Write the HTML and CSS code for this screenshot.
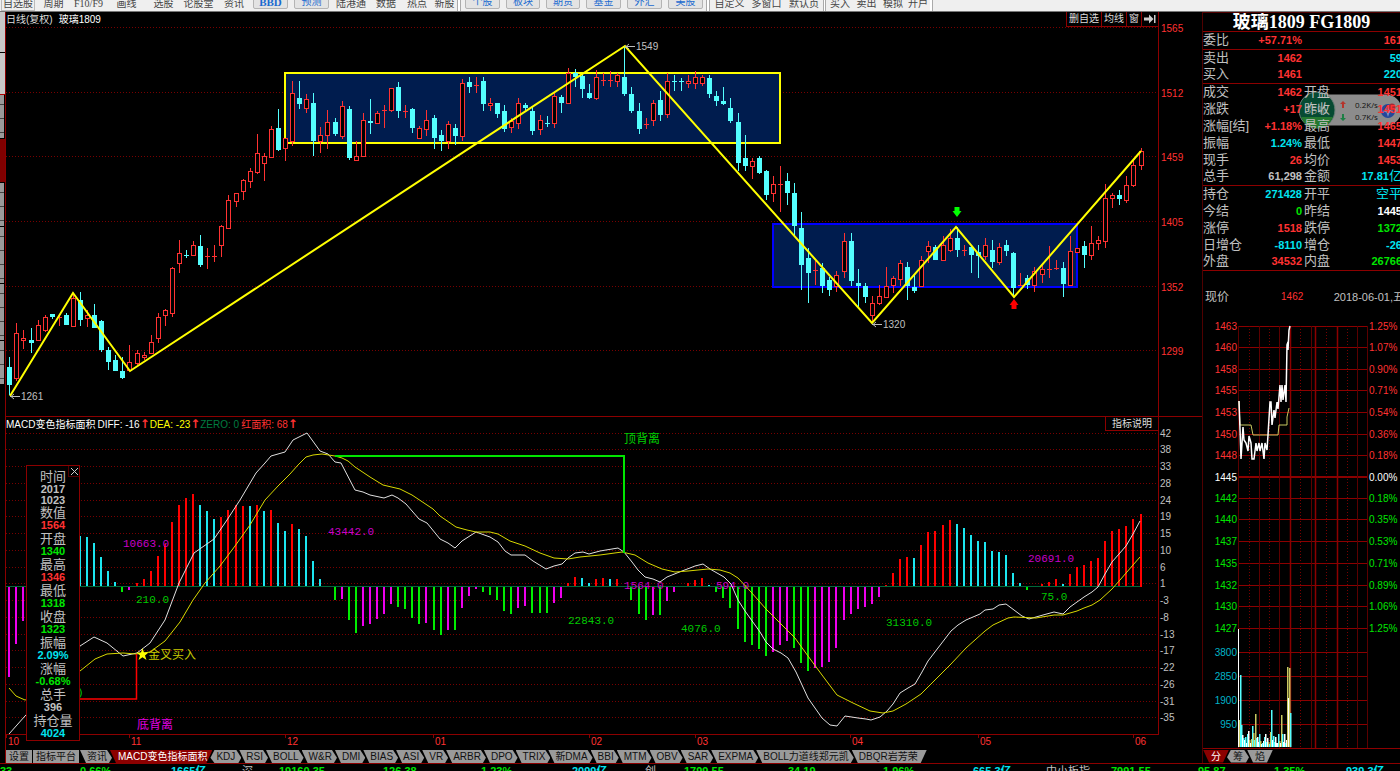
FILE: index.html
```html
<!DOCTYPE html>
<html lang="zh-CN">
<head>
<meta charset="utf-8">
<title>玻璃1809 FG1809</title>
<link rel="stylesheet" href="styles.css">
</head>
<body>
<nav class="toolbar">
  <button class="tool boxed">自选股</button><button class="tool">周期</button><button class="tool serif">F10/F9</button><button class="tool">画线</button><button class="tool">选股</button><button class="tool">论股堂</button><button class="tool">资讯</button><button class="tool key serif bold">BBD</button><button class="tool key">预测</button><button class="tool">陆港通</button><button class="tool">数据</button><button class="tool">热点</button><button class="tool">新股</button><i class="sep"></i><button class="tool key">个股</button><button class="tool key">板块</button><button class="tool key">期货</button><button class="tool key">基金</button><button class="tool key">外汇</button><button class="tool key">美股</button><i class="sep"></i><button class="tool">自定义</button><button class="tool">多窗口</button><button class="tool">默认页</button><i class="sep"></i><button class="tool">买入</button><button class="tool">卖出</button><button class="tool">模拟</button><button class="tool">开户</button><i class="sep end"></i>
</nav>

<main class="workspace">
  <aside class="rail">
    <i class="light s40"></i><i class="light s42 redline"></i><i class="s44"></i><i class="on s44"></i><i class="s44"></i><i class="s56"></i><i class="s56"></i><i class="s44"></i>
  </aside>

  <section class="charts">
    <header class="bar price-bar">
      <span class="caption">日线(复权)</span><b class="caption name">玻璃1809</b>
      <div class="actions">
        <button>删自选</button><button>均线</button><button>窗</button>
        <button aria-label="跳到最新"><svg width="12" height="10" viewBox="0 0 12 10"><path d="M0 3.500h5V.500L9.500 5 5 9.500v-3H0z" fill="#ccc"/><path d="M10 1h1.500v8H10z" fill="#ccc"/></svg></button>
      </div>
    </header>
    <svg id="price" class="plot" viewBox="6 27 1196 389"></svg>

    <header class="bar macd-bar">
      <span class="white">MACD变色指标面积</span><span class="white">DIFF: -16</span><span class="up">↑</span>
      <span class="yellow">DEA: -23</span><span class="up">↑</span>
      <span class="zero">ZERO: 0</span><span class="red">红面积: 68</span><span class="up">↑</span>
      <div class="actions"><button class="wide">指标说明</button></div>
    </header>
    <div class="macd">
      <svg id="macd" class="plot" viewBox="6 431 1196 318"></svg>
      <dl class="inspector">
        <button class="close" aria-label="关闭"><svg width="9" height="9" viewBox="0 0 9 9"><path d="M1 1l7 7M8 1l-7 7" stroke="#ccc" fill="none"/></svg></button>
        <dt>时间</dt><dd class="date">2017</dd><dd class="date second">1023</dd>
        <dt>数值</dt><dd class="red">1564</dd>
        <dt>开盘</dt><dd class="green">1340</dd>
        <dt>最高</dt><dd class="red">1346</dd>
        <dt>最低</dt><dd class="green">1318</dd>
        <dt>收盘</dt><dd class="green">1323</dd>
        <dt>振幅</dt><dd class="cyan">2.09%</dd>
        <dt>涨幅</dt><dd class="green">-0.68%</dd>
        <dt>总手</dt><dd>396</dd>
        <dt>持仓量</dt><dd class="cyan">4024</dd>
      </dl>
    </div>
    <nav class="tabs">
      <button class="block">设置</button><button class="block">指标平台</button><button>资讯</button><button class="active">MACD变色指标面积</button><button class="hex">KDJ</button><button>RSI</button><button>BOLL</button><button>W&amp;R</button><button>DMI</button><button>BIAS</button><button>ASI</button><button>VR</button><button>ARBR</button><button>DPO</button><button>TRIX</button><button>新DMA</button><button>BBI</button><button>MTM</button><button>OBV</button><button>SAR</button><button>EXPMA</button><button>BOLL力道线郑元凯</button><button class="last">DBQR岩芳荣</button>
    </nav>
  </section>

  <section class="side">
    <h1>玻璃1809 FG1809</h1>
    <table class="quotes">
      <tr class="rule"><th>委比</th><td class="red">+57.71%</td><th></th><td class="red">161</td></tr>
      <tr><th>卖出</th><td class="red">1462</td><th></th><td class="cyan">59</td></tr>
      <tr class="rule"><th>买入</th><td class="red">1461</td><th></th><td class="cyan">220</td></tr>
      <tr><th>成交</th><td class="red">1462</td><th>开盘</th><td class="red">1451</td></tr>
      <tr><th>涨跌</th><td class="red">+17</td><th>昨收</th><td class="red">1451</td></tr>
      <tr><th>涨幅[结]</th><td class="red">+1.18%</td><th>最高</th><td class="red">1465</td></tr>
      <tr><th>振幅</th><td class="cyan">1.24%</td><th>最低</th><td class="red">1447</td></tr>
      <tr><th>现手</th><td class="red">26</td><th>均价</th><td class="red">1453</td></tr>
      <tr class="rule"><th>总手</th><td>61,298</td><th>金额</th><td class="cyan">17.81<span class="unit">亿</span></td></tr>
      <tr><th>持仓</th><td class="cyan">271428</td><th>开平</th><td class="cyan"><span class="unit">空平</span></td></tr>
      <tr><th>今结</th><td class="green">0</td><th>昨结</th><td class="white">1445</td></tr>
      <tr><th>涨停</th><td class="red">1518</td><th>跌停</th><td class="green">1372</td></tr>
      <tr><th>日增仓</th><td class="cyan">-8110</td><th>增仓</th><td class="cyan">-26</td></tr>
      <tr class="rule"><th>外盘</th><td class="red">34532</td><th>内盘</th><td class="green">26766</td></tr>
    </table>
    <div class="now"><span>现价</span><span class="red">1462</span><span class="day">2018-06-01,五</span></div>
    <svg id="intraday" class="plot" viewBox="1203 318 197 430"></svg>
    <nav class="tabs side-tabs">
      <button class="active">分</button><button class="hex">筹</button><button class="last">焰</button>
    </nav>
    <svg class="meter" width="103" height="38" viewBox="0 0 103 38">
      <path d="M19 3.500h69a15.500 15.500 0 010 31H19z" fill="#8c8c8c"/>
      <circle cx="19" cy="19" r="18" fill="#064a32" stroke="#6b7f78"/>
      <path d="M3 26h32a17 17 0 01-32 0z" fill="#23782f"/>
      <text x="7" y="23" class="pct">35%</text>
      <path d="M44 17v-4h-2l3-3 3 3h-2v4z" fill="#b5342c"/>
      <path d="M44 23v4h-2l3 3 3-3h-2v-4z" fill="#1c7f45"/>
      <text x="57" y="17" class="rate">0.2K/s</text><text x="57" y="29" class="rate">0.7K/s</text>
      <circle cx="90" cy="20" r="7" fill="#24479c"/><path d="M90 14l1.500 4.500L96 20l-4.500 1.500L90 26l-1.500-4.500L84 20l4.500-1.500z" fill="#7d90bd"/><circle cx="94" cy="16" r="3.500" fill="#a82a34"/>
    </svg>
  </section>
</main>

<footer class="ticker">
  <span class="green">33</span><span class="green">0.66%</span><span class="cyan">1665亿</span><span class="label">深</span><span class="green">19160.35</span><span class="green">126.38</span><span class="green">1.23%</span><span class="cyan">2099亿</span><span class="label">创</span><span class="green">1799.55</span><span class="green">34.19</span><span class="green">1.96%</span><span class="cyan">665.3亿</span><span class="label">中小板指</span><span class="green">7991.55</span><span class="green">95.87</span><span class="green">1.35%</span><span class="cyan">939.3亿</span>
</footer>
<script src="charts.js"></script>
</body>
</html>
```

FILE: styles.css
```css
* { box-sizing: border-box; margin: 0; padding: 0; }
html, body { height: 100%; }
body {
  display: flex; flex-direction: column; overflow: hidden;
  background: #000; color: #c0c0c0;
  font: 10px/14px "Liberation Sans", "Noto Sans CJK SC", sans-serif;
}
button { font: inherit; color: inherit; background: none; border: 0; white-space: nowrap; }
svg { display: block; }
.red { color: #ff3232; }
.green { color: #00e600; }
.cyan { color: #00e4f0; }
.white { color: #fff; }
.yellow { color: #ffff00; }
.zero { color: #007c40; }

.toolbar {
  display: grid; flex: none; height: 12px; overflow: hidden; align-items: end; align-content: end;
  grid-template-columns: 34px 37px 33px 43px 31px 39px 32px 41px 41px 38px 32px 30px 25px 5px 41px 40px 40px 41px 41px 41px 5px 37px 37px 38px 4px 26px 27px 26px 24px 4px;
  padding-left: 1px; background: #efefef; border-bottom: 1px solid #777; color: #444;
}
.tool { height: 15px; line-height: 14px; }
.serif { font-family: "Liberation Serif", serif; }
.bold { font-weight: bold; font-size: 11px; }
.boxed { border: 1px solid #bbb; }
.key { margin: 0 3px 2px; height: 14px; line-height: 12px; color: #1a6ad0; background: #e3e3e3; border: 1px solid #b4b4b4; border-radius: 2px; }
.sep { height: 11px; border: solid #aaa; border-width: 0 1px; margin-right: 1px; background: #fff; }
.end { border-width: 0 1px 0 0; }

.workspace { display: grid; grid-template-columns: 6px minmax(0, 1fr) 198px; flex: none; }
.rail { border-right: 1px solid #8c0000; }
.rail i {
  display: block; border-bottom: 1px solid #000;
  background: linear-gradient(90deg, transparent 4px, #000 4px), repeating-linear-gradient(#999 0 9px, #444 9px 10px, #999 10px 14px);
}
.rail .light { background: #c8c8c8; }
.rail .on { background: #800000; }
.rail .redline { border-color: #b00000; }
.s40 { height: 41px; }
.s42 { height: 42px; }
.s44 { height: 44px; }
.s56 { height: 57px; }

.charts { min-width: 0; }
.plot { width: 100%; height: auto; overflow: visible; }
.bar { display: flex; height: 15px; margin-right: 43px; border-right: 1px solid #8c0000; line-height: 15px; white-space: nowrap; }
.caption { color: #ddd; }
.name { margin-left: 6px; color: #fff; font-weight: normal; }
.actions { display: flex; margin-left: auto; }
.actions button { padding: 0 2px; border: solid #8c0000; border-width: 0 0 1px 1px; color: #ddd; line-height: 14px; }
.actions .wide { padding: 0 6px; }
.macd-bar { border-top: 1px solid #8c0000; margin-right: 0; border-right: 0; padding-right: 43px; }
.macd-bar > span { margin-right: 2px; }
.macd-bar > .up { margin-right: 4px; margin-left: -2px; width: 6px; color: #ff3232; font: bold 12px/14px "DejaVu Sans", sans-serif; }
.macd-bar .actions { border-right: 1px solid #8c0000; }
.macd { position: relative; }
.inspector {
  position: absolute; left: 20px; top: 34px; width: 54px; padding: 4px 0 0;
  background: #000; border: 1px solid #8c0000; text-align: center;
  font-size: 13px; line-height: 13px;
}
.inspector dd { font-weight: bold; font-size: 11px; line-height: 13px; }
.inspector .date { line-height: 12px; }
.inspector .second { line-height: 11px; }
.close { position: absolute; top: 0; right: 0; padding: 1px 0 0 1px; border: solid #500000; border-width: 0 0 1px 1px; }

.tabs { display: flex; height: 14px; padding-top: 1px; }
.tabs button {
  flex: none; height: 13px; padding: 0 5px 0 7px; margin-right: -2px; line-height: 13px; color: #111; background: #9a9a9a;
  clip-path: polygon(0 0, calc(100% - 5px) 0, 100% 60%, calc(100% - 3px) 100%, 6px 100%);
}
.tabs .block { padding: 0 3px; margin-right: 1px; clip-path: none; }
.tabs .active { color: #fff; background: #8c0000; padding: 0 5px 0 8px; clip-path: polygon(0 0, 100% 0, calc(100% - 6px) 100%, 6px 100%); }
.tabs .hex { padding: 0 6px; clip-path: polygon(4px 0, calc(100% - 5px) 0, 100% 60%, calc(100% - 3px) 100%, 4px 100%, 0 60%); }
.tabs .last { padding-right: 9px; clip-path: polygon(0 0, 100% 0, calc(100% - 6px) 100%, 6px 100%); }
.side .side-tabs { border-top: 1px solid #8c0000; height: 15px; }
.side-tabs .active, .side-tabs .last { padding: 0 8px; }

.side { position: relative; overflow: hidden; border-left: 1px solid #500000; border-top: 1px solid #500000; }
.side h1 { height: 19px; color: #fff; text-align: center; font: bold 18px/18px "Liberation Serif", "Noto Sans CJK SC", serif; white-space: nowrap; border-bottom: 1px solid #8c0000; }
.quotes { position: relative; z-index: 1; width: calc(100% + 2px); border-collapse: collapse; table-layout: fixed; }
.quotes th, .quotes td { height: 17px; line-height: 16px; white-space: nowrap; }
.quotes th { font-weight: normal; font-size: 13px; text-align: left; width: 54px; }
.quotes th + td { width: 45px; }
.quotes td { font-weight: bold; font-size: 11px; text-align: right; }
.quotes td + th { padding-left: 2px; width: 48px; }
.quotes th + td:last-child { width: auto; }
.quotes .rule { border-bottom: 1px solid #8c0000; }
.unit { font-weight: normal; font-size: 13px; }
.now { display: flex; align-items: center; height: 47px; padding: 6px 0 0 2px; font-size: 12px; }
.now .red { margin-left: 52px; font-size: 10px; }
.day { margin: 0 -4px 0 auto; font-size: 11px; white-space: nowrap; }
.meter { position: absolute; left: 95px; top: 78px; }
.pct { font: 11px "Liberation Sans", sans-serif; fill: #7d9489; }
.rate { font: 8px "Open Sans", sans-serif; fill: #111; }

.ticker {
  display: grid; flex: none; height: 20px; padding-top: 1px; border-top: 1px solid #8c0000;
  grid-template-columns: 80fr 91fr 71fr 37fr 104fr 98fr 91fr 73fr 39fr 104fr 95fr 90fr 73fr 65fr 87fr 76fr 72fr 54fr;
  font-weight: bold; font-size: 11px; line-height: 13px; white-space: nowrap;
}
.ticker span { min-width: 0; }
.ticker .label { font-weight: normal; }

.grid { stroke: #780000; stroke-dasharray: 1 2; }
.axis { stroke: #8c0000; fill: none; }
.dim { stroke: #5c0000; fill: none; }
.strong { stroke: #8c0000; stroke-width: 2; }
.zigzag { stroke: #ffff00; stroke-width: 2; fill: none; }
.line { fill: none; stroke-width: 1; }
.tick { font: 10px "Liberation Sans", sans-serif; }
.mark { font: 11px "Liberation Mono", monospace; }
.note { font: 12px "Noto Sans CJK SC", sans-serif; }
```

FILE: charts.js
```js
const NS = 'http://www.w3.org/2000/svg';
const RED = '#ff3232', CYAN = '#54ffff';
const slot = i => Math.round(9.3 + 7.07 * i);

function add(svg, tag, attrs, text) {
  const el = document.createElementNS(NS, tag);
  for (const k in attrs) el.setAttribute(k, attrs[k]);
  if (text !== undefined) el.textContent = text;
  svg.appendChild(el);
}
const line = (s, x1, y1, x2, y2, c) => add(s, 'line', { x1, y1, x2, y2, class: c });
const box = (s, x, y, width, height, fill) => add(s, 'rect', { x, y, width, height, fill });
const label = (s, x, y, t, fill, cls = 'tick', anchor = 'start') =>
  add(s, 'text', { x, y, fill, class: cls, 'text-anchor': anchor }, t);
const poly = (s, points, stroke, cls = 'line') => add(s, 'polyline', { points, stroke, class: cls });

/* Price chart: kind, high, body top, body bottom, low */
const candles = `c 357 367 385 395;r 323 333 378 381;r 330 338 340 349;c 328 340 343 353;r 320 325 340 340;r 315 317 330 332;c 314 314 317 319;r 315 317 318 326;c 313 315 325 325;r 295 298 326 326
c 292 300 320 326;r 310 315 318 327;c 304 315 328 328;c 320 321 350 352;c 347 350 362 370;c 355 360 371 371;c 357 371 378 379;r 345 362 370 370;r 350 353 363 365;r 352 355 357 360
r 335 342 353 353;r 313 317 338 343;r 309 310 315 326;r 267 268 313 317;r 240 253 263 273;c 250 255 256 258;r 241 245 255 255;c 235 246 265 267;r 248 256 257 269;r 245 256 257 262
r 225 226 245 257;r 195 200 228 228;r 193 193 201 207;r 179 180 191 200;r 168 171 181 188;r 134 153 172 174;r 153 156 163 181;r 126 129 157 158;c 109 128 150 151;r 138 138 148 161
r 81 93 141 146;c 81 98 104 109;r 94 99 108 113;c 93 103 141 156;r 127 135 141 153;r 110 122 135 149;c 118 122 134 136;r 101 106 136 139;c 106 109 158 160;r 141 156 160 161
r 113 120 156 156;c 99 121 123 134;r 111 113 123 123;r 105 110 111 128;r 88 88 110 112;c 82 87 111 118;r 105 111 112 118;c 108 109 128 133;r 126 128 138 138;r 110 120 129 136
c 115 118 138 149;c 130 135 141 151;r 121 124 141 149;c 124 128 136 145;r 79 83 136 141;c 77 82 87 93;r 77 85 86 93;c 77 81 104 111;r 98 103 105 111;c 103 103 114 118
c 105 111 129 132;r 118 121 127 133;r 98 103 123 129;c 103 105 108 110;c 107 111 131 135;r 115 120 129 135;c 116 123 124 127;r 93 96 123 128;c 95 97 103 113;r 68 73 103 103
c 69 73 77 87;c 74 76 89 98;c 84 93 98 99;r 70 77 98 100;r 73 80 81 86;r 71 80 81 87;r 73 75 81 87;c 46 77 94 96;c 87 94 111 113;c 103 111 129 134
r 118 124 125 129;r 100 103 120 126;c 91 100 115 121;r 73 81 114 118;c 75 81 82 91;c 78 81 82 91;r 75 81 83 88;r 71 77 83 89;r 75 77 83 86;c 75 78 94 98
c 91 96 101 106;c 87 101 104 105;c 98 108 121 123;c 113 122 163 171;c 135 158 166 171;r 158 161 166 179;c 156 158 173 174;c 170 171 195 200;r 176 184 193 202;r 166 184 185 212
c 173 181 193 205;c 183 193 226 237;c 212 228 265 290;c 248 258 273 303;r 261 270 271 285;c 263 268 286 293;c 277 280 290 296;r 271 275 286 292;r 233 241 271 278;c 233 241 281 286
c 269 283 286 307;c 283 286 297 303;r 296 303 315 323;r 285 296 303 305;r 267 286 297 297;r 276 278 285 293;r 260 263 279 286;c 262 267 286 300;c 275 287 291 293;r 256 260 286 286
r 241 246 251 263;c 245 247 260 260;r 236 245 260 260;r 229 238 250 252;c 227 238 250 257;r 245 250 251 256;c 245 247 255 273;c 245 252 256 278;r 238 245 256 260;c 240 250 262 268
r 243 247 262 265;c 240 245 251 256;c 252 253 288 295;r 273 285 286 286;c 275 278 285 289;r 267 271 285 292;r 263 269 274 283;r 246 269 270 278;r 260 268 269 270;c 262 268 284 297
r 236 251 285 286;r 248 248 252 252;c 241 246 255 268;r 226 243 255 260;r 236 240 243 250;r 184 198 241 248;r 193 195 198 208;c 190 195 199 205;r 176 185 200 203;r 159 165 185 187;r 148 151 165 170`;

const price = document.getElementById('price');
[[1565, 27.5], [1512, 92.5], [1459, 156.5], [1405, 221.5], [1352, 286.5], [1299, 350.5]].forEach(([v, y]) => {
  line(price, 6, y, 1158, y, 'grid');
  label(price, 1161, y + 4, v, RED);
});
line(price, 1158.5, 27, 1158.5, 416, 'axis');
add(price, 'rect', { x: 285, y: 73, width: 495, height: 70, fill: '#001c4e', stroke: '#ffff00', 'stroke-width': 2 });
add(price, 'rect', { x: 773, y: 224, width: 304, height: 63, fill: '#001c4e', stroke: '#0000ff', 'stroke-width': 2 });
candles.split(/[;\n]/).forEach((row, i) => {
  const [kind, ...n] = row.split(' ');
  const [hi, top, bottom, lo] = n.map(Number);
  const x = slot(i), color = kind === 'c' ? CYAN : RED;
  box(price, x, hi, 1, lo - hi, color);
  if (bottom - top < 2) box(price, x - 2, top, 5, 1, color);
  else if (kind === 'c') box(price, x - 2, top, 5, bottom - top, color);
  else add(price, 'rect', { x: x - 1.5, y: top + .5, width: 4, height: bottom - top, fill: '#000', stroke: RED });
});
poly(price, '10,396 73,293 130,371 625,46 872,323 956,227 1014,297 1141,151', '#ffff00', 'zigzag');
[[10, 396, 1261], [625, 46, 1549], [872, 324, 1320]].forEach(([x, y, v]) => {
  add(price, 'path', { d: `M${x} ${y + .5}h10M${x + 4} ${y - 2}l-3 2.5 3 2.500`, stroke: '#bbb', fill: 'none' });
  label(price, x + 11, y + 4, v, '#c0c0c0');
});
add(price, 'path', { d: 'M954.500 207h5v4h2l-4.500 6-4.500-6h2z', fill: '#00ff00' });
add(price, 'path', { d: 'M1011.500 309h5v-4h2l-4.500-6-4.500 6h2z', fill: '#ff0000' });

/* MACD: one bar per slot, kind and end height; "-" is an empty slot */
const bars = `m677 m644 m621 - - - - - - - c536 c537 c543 c557 c571 c582 g592 m590 r583 r579 r571 r556 r544 r522 r505 r498 r494 c505 c511 c519 r517 r510 r505 r506 c506 r505 c511 r510 c523 c531
r524 c529 c536 c561 c579 - g600 m599 g620 g633 m626 m624 m619 m614 m604 g607 g609 g618 g624 m623 g630 g635 m630 g630 m608 m596 m589 g592 g595 g600 g611 g614 m608 m606 g613 g613 g613 m603 m598 r583
r577 c578 c583 r579 r578 c579 r579 - g600 g614 g620 m615 g615 m601 m592 - r583 r580 r578 c585 g592 g598 g608 g629 g642 g645 g649 g656 m652 m645 m641 g648 g663 g671 m668 m667 m662 m648 m620 m614
m609 m607 m604 m597 r585 r573 r559 r557 c558 r545 r532 r531 r525 r520 c524 c528 c535 c541 c542 c551 c552 c555 c573 c583 g590 - r584 r582 r579 c584 r574 r567 r565 r561 r558 r541 r531 r529 r526 r519 r514`;
const tone = { r: '#f00', c: '#1ce6f0', g: '#0e0', m: '#e0e' };

const macd = document.getElementById('macd');
[[42, 433], [38, 449], [33, 466], [28, 483], [24, 500], [19, 516], [15, 533], [10, 550], [6, 567], [1, 583], [-3, 600], [-8, 617], [-13, 634], [-17, 650], [-22, 667], [-26, 684], [-31, 701], [-35, 717]].forEach(([v, y]) => {
  line(macd, 6, y + .5, 1158, y + .5, 'grid');
  label(macd, 1160, y + 4, v, '#c0c0c0');
});
line(macd, 1158.5, 431, 1158.5, 735, 'axis');
line(macd, 6, 734.5, 1158, 734.5, 'axis');
[['10', 7], ['11', 130], ['12', 286], ['01', 434], ['02', 590], ['03', 696], ['04', 851], ['05', 979], ['06', 1134]].forEach(([t, x]) => {
  line(macd, x - .5, 734, x - .5, 738, 'axis');
  label(macd, x + 1, 745, t, RED);
});
bars.split(/\s/).forEach((b, i) => {
  if (b === '-') return;
  const y = +b.slice(1);
  box(macd, slot(i) - 1, Math.min(y, 587), 2, Math.abs(587 - y), tone[b[0]]);
});
line(macd, 6, 586.5, 1140, 586.5, 'zero-line');
macd.lastChild.setAttribute('stroke', '#006838');
[[123, 547, '10663.0'], [328, 535, '43442.0'], [624, 589, '1564.0'], [716, 589, '594.0'], [1028, 562, '20691.0']].forEach(([x, y, t]) => label(macd, x, y, t, '#c800c8', 'mark'));
[[136, 603, '210.0'], [568, 624, '22843.0'], [681, 632, '4076.0'], [886, 626, '31310.0'], [1041, 600, '75.0'], [77, 696, ')']].forEach(([x, y, t]) => label(macd, x, y, t, '#00c800', 'mark'));
poly(macd, '9,734 25,716 50,690 80,646 94,637 107,643 123,656 137,653 150,643 165,620 179,583 194,553 214,539 227,520 240,500 256,473 265,463 271,456 285,452 293,440 307,433 320,451 328,454 335,462 341,463 355,490 363,492 370,495 384,498 392,495 398,498 406,504 419,519 427,523 440,539 448,543 455,548 462,541 476,532 490,537 498,542 505,551 511,555 525,555 533,561 546,569 554,566 562,564 568,558 575,553 583,552 589,554 600,551 618,548 624,552 632,562 638,570 645,577 653,579 660,582 667,577 682,571 690,568 695,566 703,564 710,569 717,573 724,577 731,584 738,600 745,611 760,632 766,642 773,649 781,653 788,658 796,672 808,698 822,718 830,725 837,726 845,716 858,718 866,719 871,720 880,717 887,711 893,704 900,693 908,688 915,684 922,672 928,661 951,631 958,625 966,620 980,614 985,610 993,609 999,605 1006,604 1014,610 1022,616 1029,619 1036,617 1043,615 1054,612 1063,614 1070,607 1077,602 1084,597 1092,592 1098,587 1105,574 1112,562 1126,546 1133,534 1140,521', '#e0e0e0');
poly(macd, '9,688 16,696 25,700 50,694 80,671 95,659 107,654 123,653 136,654 150,652 165,641 180,622 193,600 205,583 220,566 235,546 250,525 265,500 278,486 290,474 298,465 306,457 313,455 322,454 335,456 342,458 348,461 355,467 370,477 383,485 400,489 412,495 433,509 440,516 456,527 467,530 476,532 490,532 498,534 510,541 525,546 540,553 554,558 568,559 580,557 600,555 622,552 635,555 648,563 662,569 675,572 688,571 708,569 720,570 730,573 738,578 751,592 766,609 780,623 795,638 808,656 822,675 837,695 853,703 870,711 883,713 893,711 906,704 921,694 936,679 951,664 966,648 985,631 993,625 1008,618 1014,617 1036,618 1054,615 1063,615 1077,611 1084,608 1092,605 1100,600 1112,589 1120,580 1133,565 1140,557', '#d8d800');
add(macd, 'path', { d: 'M335 456h289v97', fill: 'none', stroke: '#00e600', 'stroke-width': 2 });
add(macd, 'path', { d: 'M70 699h66.500v-45', fill: 'none', stroke: '#ff0000', 'stroke-width': 1.5 });
add(macd, 'path', { d: 'M142.500 648l1.500 4.500h4.500l-3.500 3 1.500 4.500-4-2.800-4 2.800 1.500-4.500-3.500-3h4.500z', fill: '#ffff00' });
label(macd, 148, 659, '金叉买入', '#c8c800', 'note');
label(macd, 624, 443, '顶背离', '#00d000', 'note');
label(macd, 137, 729, '底背离', '#e000e0', 'note');

/* Intraday price and volume */
const day = document.getElementById('intraday');
const rows = [[1463, '1.25%', 326], [1460, '1.07%', 347], [1458, '0.90%', 369], [1455, '0.71%', 390], [1453, '0.54%', 412], [1450, '0.36%', 434], [1448, '0.18%', 455], [1445, '0.00%', 477], [1442, '0.18%', 498], [1440, '0.35%', 519], [1437, '0.53%', 541], [1435, '0.71%', 563], [1432, '0.89%', 585], [1430, '1.06%', 606], [1427, '1.25%', 628]];
rows.forEach(([v, p, y], i) => {
  const color = i < 7 ? RED : i === 7 ? '#fff' : '#00e600';
  line(day, 1238, y + (i === 7 ? 0 : .5), 1368, y + (i === 7 ? 0 : .5), i === 7 ? 'strong' : 'axis');
  label(day, 1237, y + 4, v, color, 'tick', 'end');
  label(day, 1369, y + 4, p, color);
});
[[3800, 652], [2850, 676], [1900, 700], [950, 724]].forEach(([v, y]) => {
  line(day, 1238, y + .5, 1368, y + .5, 'axis');
  label(day, 1237, y + 4, v, '#00b4c8', 'tick', 'end');
});
[1238.5, 1259.5, 1279.5, 1311.5, 1357.5, 1367.5].forEach(x => line(day, x, 326, x, 748, 'dim'));
[1290.5, 1315.5, 1337.5].forEach(x => add(day, 'line', { x1: x, y1: 326, x2: x, y2: 748, stroke: '#8c0000', 'stroke-width': 1.5 }));
[1249.5, 1269.5, 1300.5, 1326.5, 1347.5].forEach(x => line(day, x, 326, x, 748, 'grid'));
poly(day, '1239,401 1240,425 1251,425 1253,435 1278,435 1279,425 1287,425 1287,417 1289,408', '#c8c860');
add(day, 'polyline', { points: '1239,401 1240,429 1241,459 1243,427 1244,440 1246,443 1248,451 1249,436 1251,443 1252,459 1254,459 1256,443 1257,451 1259,443 1260,451 1262,443 1263,451 1264,459 1265,443 1267,450 1268,435 1270,402 1271,402 1272,425 1274,410 1275,418 1277,402 1278,409 1280,385 1281,402 1282,385 1283,400 1285,385 1286,402 1287,345 1288,342 1288,350 1289,330 1290,326', fill: 'none', stroke: '#fff', 'stroke-width': 1.5 });
const volume = 'w629 y720 c675 c725 w735 c738 w740 c737 w743 c734 w731 y740 w743 y739 c726 y733 c740 y714 c738 w737 w742 c734 y741 w744 c743 w741 c737 w734 c742 w738 y742 c744 y732 c710 w740 c736 c742 w737 w743 w743 c734 y741 w743 y715 c734 w742 w734 c743 w740 y667 w698 y668 c713';
volume.split(' ').forEach((v, i) => {
  const y = +v.slice(1);
  box(day, 1238 + i, y, i ? 1.5 : 1, 747 - y, { w: '#fff', y: '#c8c860', c: CYAN }[v[0]]);
});
```
